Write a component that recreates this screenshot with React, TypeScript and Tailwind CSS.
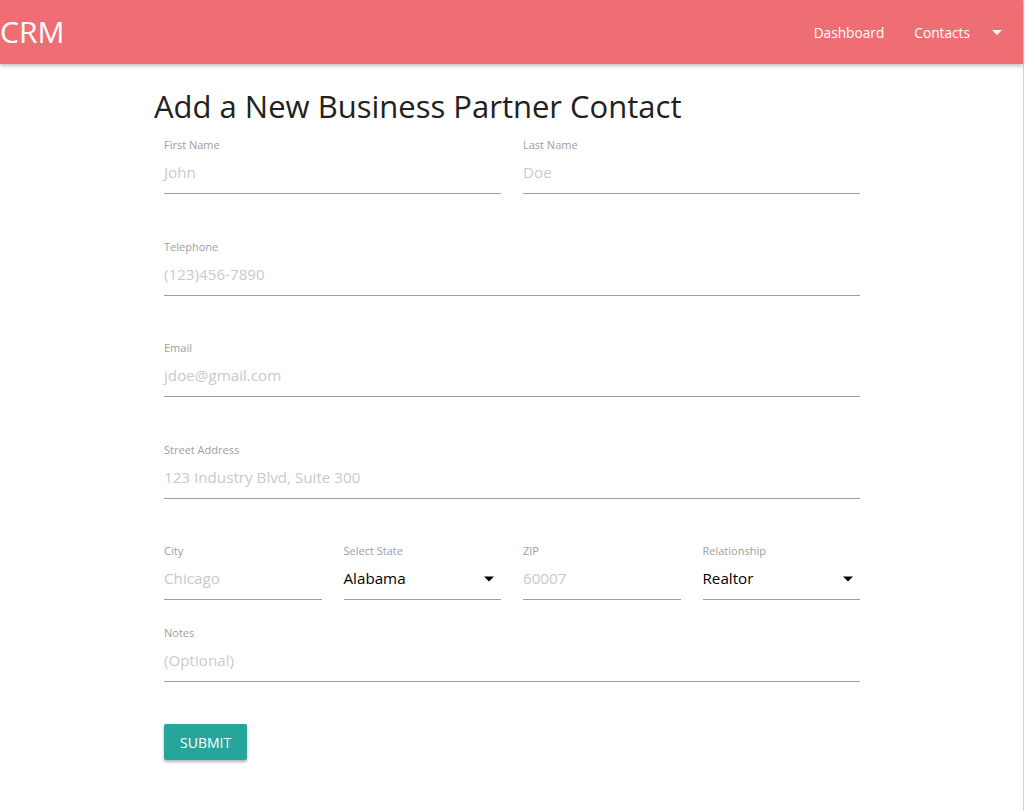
import React from "react";

const font = { fontFamily: '"Open Sans", "Noto Sans", sans-serif' };

function Field({ label, placeholder, className = "" }: { label: string; placeholder: string; className?: string }) {
  return (
    <div className={`flex flex-col ${className}`}>
      <label className="text-[11px] leading-[14px] text-[#9e9e9e]">{label}</label>
      <div className="h-[42px] flex items-center border-b border-[#9e9e9e] text-[15.2px] text-[#cacaca]">
        {placeholder}
      </div>
    </div>
  );
}

function Select({ label, value, className = "" }: { label: string; value: string; className?: string }) {
  return (
    <div className={`flex flex-col ${className}`}>
      <label className="text-[11px] leading-[14px] text-[#9e9e9e]">{label}</label>
      <div className="h-[42px] flex items-center justify-between border-b border-[#9e9e9e] text-[15.2px] text-black">
        <span>{value}</span>
        <svg width="10" height="6" viewBox="0 0 10 5" className="mr-[7px]">
          <path d="M0 0 L10 0 L5 5 Z" fill="#000" />
        </svg>
      </div>
    </div>
  );
}

export default function App() {
  return (
    <div className="min-h-[811px] w-[1024px] bg-white border-r border-[#d4d4d4]" style={font}>
      <nav className="h-[64px] bg-[#ee6e73] flex items-center justify-between text-white shadow-[0_2px_4px_rgba(0,0,0,0.25)] relative">
        <div className="text-[30px] leading-none -mt-[1px]">CRM</div>
        <div className="flex items-center text-[13.7px] mt-[2px]">
          <a className="pr-[30px]">Dashboard</a>
          <a className="flex items-center">
            Contacts
            <svg width="10" height="5" viewBox="0 0 10 5" className="ml-[22px] mr-[21px]">
              <path d="M0 0 L10 0 L5 5 Z" fill="#fff" />
            </svg>
          </a>
        </div>
      </nav>
      <div className="w-[716px] ml-[154px]">
        <h4 className="text-[31px] leading-[40px] text-[#212121] mt-[22px]">Add a New Business Partner Contact</h4>
        <div className="px-[10px] mt-[12px]">
          <div className="grid grid-cols-2 gap-x-[22px]">
            <Field label="First Name" placeholder="John" />
            <Field label="Last Name" placeholder="Doe" />
          </div>
          <Field label="Telephone" placeholder="(123)456-7890" className="mt-[46px]" />
          <Field label="Email" placeholder="jdoe@gmail.com" className="mt-[45px]" />
          <Field label="Street Address" placeholder="123 Industry Blvd, Suite 300" className="mt-[46px]" />
          <div className="grid grid-cols-4 gap-x-[22px] mt-[45px]">
            <Field label="City" placeholder="Chicago" />
            <Select label="Select State" value="Alabama" />
            <Field label="ZIP" placeholder="60007" />
            <Select label="Relationship" value="Realtor" />
          </div>
          <Field label="Notes" placeholder="(Optional)" className="mt-[26px]" />
          <button className="mt-[42px] h-[36px] px-[16px] bg-[#26a69a] text-white text-[14px] uppercase rounded-[2px] shadow-[0_2px_3px_rgba(0,0,0,0.3)]">
            Submit
          </button>
        </div>
      </div>
    </div>
  );
}
